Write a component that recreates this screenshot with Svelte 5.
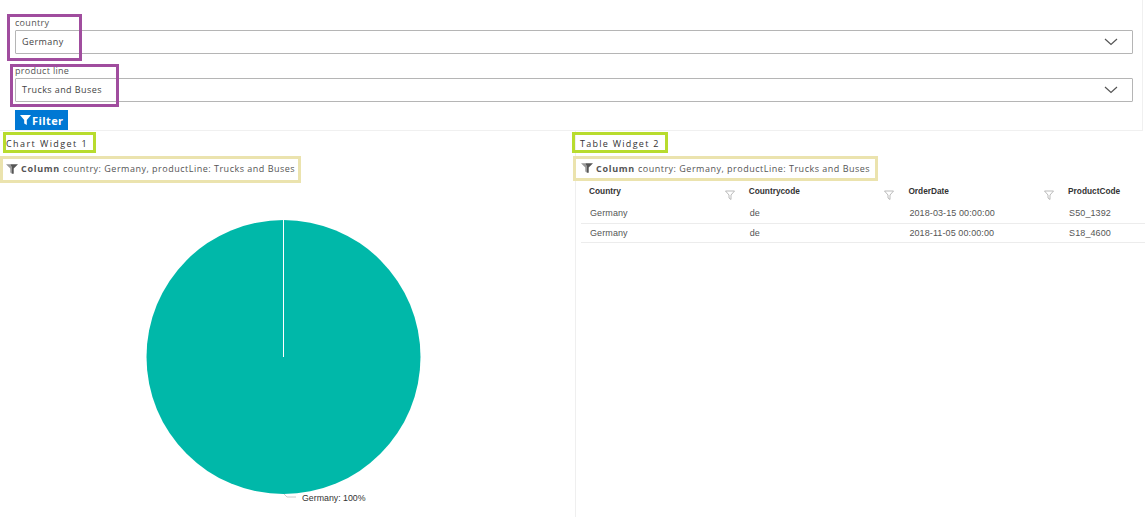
<script>
  const rows = [
    { country: "Germany", code: "de", date: "2018-03-15 00:00:00", product: "S50_1392" },
    { country: "Germany", code: "de", date: "2018-11-05 00:00:00", product: "S18_4600" },
  ];
  const columns = ["Country", "Countrycode", "OrderDate", "ProductCode"];
  const filterText = "country: Germany, productLine: Trucks and Buses";
</script>

<main>
  <section class="form">
    <div class="field first">
      <span class="mark mark-country"></span>
      <label for="country">country</label>
      <div class="select" id="country">
        <span>Germany</span>
        <svg width="14" height="8" viewBox="0 0 14 8"><path d="M1 1l6 5.5L13 1" fill="none" stroke="#555" stroke-width="1.2" /></svg>
      </div>
    </div>
    <div class="field second">
      <span class="mark mark-product"></span>
      <label for="product">product line</label>
      <div class="select" id="product">
        <span>Trucks and Buses</span>
        <svg width="14" height="8" viewBox="0 0 14 8"><path d="M1 1l6 5.5L13 1" fill="none" stroke="#555" stroke-width="1.2" /></svg>
      </div>
    </div>
    <button>
      <svg width="11" height="10" viewBox="0 0 11 10"><path d="M0 0h11L6.8 5v5L4.2 8.4V5z" fill="#fff" /></svg>
      Filter
    </button>
  </section>

  <div class="widgets">
    <section class="widget left">
      <h3 class="title"><span>Chart Widget 1</span></h3>
      <div class="applied">
        <svg width="12" height="10" viewBox="0 0 14 11"><path d="M0 0h5l2 4v7L5 9.5V5z" fill="#999" /><path d="M5 0h9L9 5v6L7 11V4z" fill="#555" /></svg>
        <b>Column</b><span>{filterText}</span>
      </div>
      <svg class="pie" width="575" height="336" viewBox="0 0 575 336">
        <circle cx="283.5" cy="175" r="137" fill="#00b8a9" />
        <path d="M283.5 38v137" stroke="#fff" stroke-width="1" />
        <path d="M284 312l3 3h9" fill="none" stroke="#ccc" stroke-width="1" />
        <text x="302" y="319">Germany: 100%</text>
      </svg>
    </section>

    <section class="widget right">
      <h3 class="title"><span>Table Widget 2</span></h3>
      <div class="applied">
        <svg width="12" height="10" viewBox="0 0 14 11"><path d="M0 0h5l2 4v7L5 9.5V5z" fill="#999" /><path d="M5 0h9L9 5v6L7 11V4z" fill="#555" /></svg>
        <b>Column</b><span>{filterText}</span>
      </div>
      <div class="table">
        <div class="row head">
          {#each columns as col}
            <div class="cell">
              <span>{col}</span>
              {#if col !== "ProductCode"}
                <svg width="10" height="10" viewBox="0 0 10 10"><path d="M.5 1h9L6 5v4.5L4 8V5z" fill="none" stroke="#aaa" stroke-width=".8" /></svg>
              {/if}
            </div>
          {/each}
        </div>
        {#each rows as r}
          <div class="row">
            <div class="cell">{r.country}</div>
            <div class="cell">{r.code}</div>
            <div class="cell">{r.date}</div>
            <div class="cell">{r.product}</div>
          </div>
        {/each}
      </div>
    </section>
  </div>
</main>

<style>
  :global(body) {
    background: #fff;
    overflow: hidden;
  }
  main {
    width: 1145px;
    height: 517px;
    overflow: hidden;
    font-family: "Open Sans", sans-serif;
    color: #444;
  }
  .form {
    position: relative;
    box-sizing: border-box;
    width: 1143px;
    height: 131px;
    padding: 16px 9px 0 15px;
    border-right: 1px solid #f0f0f0;
    border-bottom: 1px solid #f0f0f0;
  }
  .field {
    display: flex;
    flex-direction: column;
  }
  .second {
    margin-top: 10px;
  }
  label {
    font-size: 9px;
    line-height: 14px;
    letter-spacing: 0.3px;
    color: #555;
  }
  .select {
    box-sizing: border-box;
    height: 24px;
    display: flex;
    align-items: center;
    justify-content: space-between;
    padding: 0 14px 0 6px;
    border: 1px solid #b5b5b5;
    border-radius: 1px;
    font-size: 9px;
    letter-spacing: 0.42px;
  }
  .select span {
    margin-bottom: 2px;
  }
  .mark {
    position: absolute;
    box-sizing: border-box;
    border: 3px solid #a04d9e;
  }
  .mark-country {
    left: 7px;
    top: 14px;
    width: 75px;
    height: 47px;
  }
  .mark-product {
    left: 10px;
    top: 64px;
    width: 109px;
    height: 43px;
  }
  button {
    display: flex;
    align-items: center;
    gap: 1px;
    height: 20px;
    width: 53px;
    margin-top: 8px;
    padding: 0 0 0 5px;
    border: 0;
    background: #0078d4;
    color: #fff;
    font-family: "Open Sans", sans-serif;
    font-size: 11px;
    font-weight: 700;
    letter-spacing: 0.4px;
  }
  .widgets {
    display: grid;
    grid-template-columns: 576px 1fr;
  }
  .widget {
    min-width: 0;
    height: 386px;
  }
  .left {
    border-right: 1px solid #efefef;
  }
  .title {
    margin: 1px 0 0;
    height: 24px;
    font-size: 9px;
    font-weight: 400;
    letter-spacing: 1.27px;
    color: #333;
  }
  .title span {
    display: inline-block;
    box-sizing: border-box;
    height: 21px;
    line-height: 17px;
    padding: 0 5px 0 0;
    margin-left: 3px;
    border: 3px solid #b8dc2e;
  }
  .left .title {
    letter-spacing: 1.42px;
  }
  .right .title span {
    margin-left: -4px;
    padding: 0 5px 0 5px;
  }
  .applied {
    display: flex;
    align-items: center;
    gap: 3px;
    box-sizing: border-box;
    width: 301px;
    height: 27px;
    padding: 0 0 2px 3px;
    border: 3px solid #ebe3ae;
    font-size: 9px;
    letter-spacing: 0.5px;
    white-space: pre;
    color: #555;
  }
  .applied b {
    letter-spacing: 0.7px;
  }
  .right .applied {
    width: 305px;
    margin-left: -3px;
    height: 25px;
    padding-bottom: 1px;
    padding-left: 5px;
  }
  .pie {
    display: block;
    margin-top: -1px;
  }
  .pie text {
    font-family: "Liberation Sans", sans-serif;
    font-size: 8.8px;
    fill: #333;
  }
  .table {
    margin-top: 0;
    margin-left: 5px;
    width: 640px;
    font-family: "Liberation Sans", sans-serif;
    font-size: 9px;
    letter-spacing: 0.1px;
    color: #555;
  }
  .row {
    display: grid;
    grid-template-columns: repeat(4, 159.7px);
    height: 19px;
    border-bottom: 1px solid #ececec;
    box-sizing: border-box;
  }
  .cell {
    display: flex;
    align-items: center;
    justify-content: space-between;
    padding: 0 8px 1px 9px;
  }
  .head + .row .cell {
    padding-bottom: 3px;
  }
  .head {
    height: 24px;
    border: 0;
    font-size: 8.3px;
    font-weight: 700;
    letter-spacing: 0;
    color: #333;
  }
  .head .cell {
    padding-left: 8px;
    padding-bottom: 7px;
  }
  .head svg {
    margin-top: 9px;
    margin-right: -2px;
  }
</style>
